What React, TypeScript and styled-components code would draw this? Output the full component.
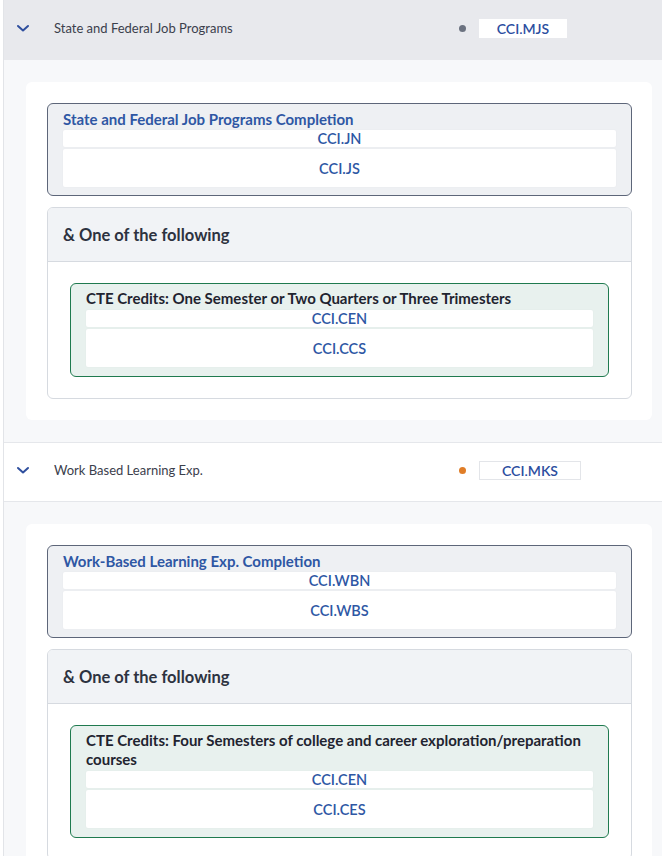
import React from 'react';
import styled, { createGlobalStyle } from 'styled-components';

const GlobalStyle = createGlobalStyle`
  html, body {
    margin: 0;
    padding: 0;
    background: #ffffff;
    font-family: Lato, "Noto Sans", sans-serif;
  }
  * { box-sizing: border-box; }
`;

const Page = styled.div`
  margin-left: 3px;
  border-left: 1px solid #e2e4e8;
  min-height: 856px;
  background: #f7f8fa;
`;

const SectionHeader = styled.div<{ $active?: boolean }>`
  display: grid;
  grid-template-columns: 38px 1fr 203px;
  align-items: center;
  height: 60px;
  padding: 0 0 4px 12px;
  background: ${({ $active }) => ($active ? '#e8e9ed' : '#ffffff')};
  border-top: ${({ $active }) => ($active ? 'none' : '1px solid #e5e7eb')};
  border-bottom: ${({ $active }) => ($active ? 'none' : '1px solid #e5e7eb')};
`;

const Chevron = styled.svg`
  width: 14px;
  height: 10px;
  color: #2f4f9e;
`;

const HeaderTitle = styled.span`
  font-size: 13px;
  color: #3b404c;
`;

const Status = styled.div`
  display: flex;
  align-items: center;
  gap: 13px;
`;

const Dot = styled.span<{ $color: string }>`
  width: 7px;
  height: 7px;
  border-radius: 50%;
  background: ${({ $color }) => $color};
`;

const CodeBadge = styled.span<{ $bordered?: boolean; $width: number }>`
  width: ${({ $width }) => $width}px;
  height: 19px;
  display: flex;
  align-items: center;
  justify-content: center;
  background: #ffffff;
  border: 1px solid ${({ $bordered }) => ($bordered ? '#e3e5e9' : '#ffffff')};
  font-size: 14px;
  font-weight: 600;
  color: #2c4e9f;
`;

const Panel = styled.div`
  padding: 22px 10px 22px 22px;
`;

const Card = styled.div`
  background: #ffffff;
  border-radius: 6px;
  padding: 21px 20px 21px 21px;
  display: flex;
  flex-direction: column;
  gap: 11px;
`;

const GroupBox = styled.div`
  background: #eef0f3;
  border: 1px solid #5d6679;
  border-radius: 6px;
  padding: 5px 15px 8px 15px;
  display: flex;
  flex-direction: column;
  gap: 1px;
`;

const GroupTitle = styled.div`
  font-size: 15px;
  font-weight: 700;
  color: #2e57a4;
  line-height: 20px;
`;

const CourseList = styled.div`
  display: flex;
  flex-direction: column;
  gap: 2px;
`;

const CourseRow = styled.div<{ $tall?: boolean }>`
  height: ${({ $tall }) => ($tall ? '38px' : '17px')};
  display: flex;
  align-items: center;
  justify-content: center;
  background: #ffffff;
  border-radius: 2px;
  box-shadow: 0 0 2px rgba(0, 0, 0, 0.04);
  font-size: 14.5px;
  font-weight: 600;
  color: #2e57a4;
`;

const ChoiceBox = styled.div`
  border: 1px solid #d6dae0;
  border-radius: 6px;
  overflow: hidden;
  background: #ffffff;
`;

const ChoiceHeader = styled.div`
  height: 54px;
  display: flex;
  align-items: center;
  padding-left: 15px;
  background: #f1f3f6;
  border-bottom: 1px solid #d6dae0;
  font-size: 16.5px;
  font-weight: 700;
  color: #2d3240;
`;

const ChoiceBody = styled.div`
  padding: 21px 22px 21px 22px;
`;

const CreditBox = styled.div`
  background: #e8f1ee;
  border: 1px solid #1f7a4f;
  border-radius: 6px;
  padding: 5px 15px 9px 15px;
  display: flex;
  flex-direction: column;
  gap: 2px;
`;

const CreditTitle = styled.div`
  font-size: 15px;
  font-weight: 700;
  color: #1f2430;
  line-height: 19px;
`;

type Section = {
  name: string;
  code: string;
  codeWidth: number;
  dot: string;
  active: boolean;
  group: string;
  groupCourses: string[];
  credit: string;
  creditCourses: string[];
};

const sections: Section[] = [
  {
    name: 'State and Federal Job Programs',
    code: 'CCI.MJS',
    codeWidth: 88,
    dot: '#6b7280',
    active: true,
    group: 'State and Federal Job Programs Completion',
    groupCourses: ['CCI.JN', 'CCI.JS'],
    credit: 'CTE Credits: One Semester or Two Quarters or Three Trimesters',
    creditCourses: ['CCI.CEN', 'CCI.CCS'],
  },
  {
    name: 'Work Based Learning Exp.',
    code: 'CCI.MKS',
    codeWidth: 102,
    dot: '#e07d27',
    active: false,
    group: 'Work-Based Learning Exp. Completion',
    groupCourses: ['CCI.WBN', 'CCI.WBS'],
    credit: 'CTE Credits: Four Semesters of college and career exploration/preparation courses',
    creditCourses: ['CCI.CEN', 'CCI.CES'],
  },
];

const Courses: React.FC<{ items: string[] }> = ({ items }) => (
  <CourseList>
    {items.map((c, i) => (
      <CourseRow key={c} $tall={i > 0}>
        {c}
      </CourseRow>
    ))}
  </CourseList>
);

const App: React.FC = () => {
  return (
    <>
      <GlobalStyle />
      <Page>
        {sections.map((s) => (
          <div key={s.code}>
            <SectionHeader $active={s.active}>
              <Chevron viewBox="0 0 14 10" fill="none">
                <path d="M2 3l5 4.5L12 3" stroke="currentColor" strokeWidth="2" strokeLinecap="round" strokeLinejoin="round" />
              </Chevron>
              <HeaderTitle>{s.name}</HeaderTitle>
              <Status>
                <Dot $color={s.dot} />
                <CodeBadge $bordered={!s.active} $width={s.codeWidth}>
                  {s.code}
                </CodeBadge>
              </Status>
            </SectionHeader>
            <Panel>
              <Card>
                <GroupBox>
                  <GroupTitle>{s.group}</GroupTitle>
                  <Courses items={s.groupCourses} />
                </GroupBox>
                <ChoiceBox>
                  <ChoiceHeader>&amp; One of the following</ChoiceHeader>
                  <ChoiceBody>
                    <CreditBox>
                      <CreditTitle>{s.credit}</CreditTitle>
                      <Courses items={s.creditCourses} />
                    </CreditBox>
                  </ChoiceBody>
                </ChoiceBox>
              </Card>
            </Panel>
          </div>
        ))}
      </Page>
    </>
  );
};

export default App;
